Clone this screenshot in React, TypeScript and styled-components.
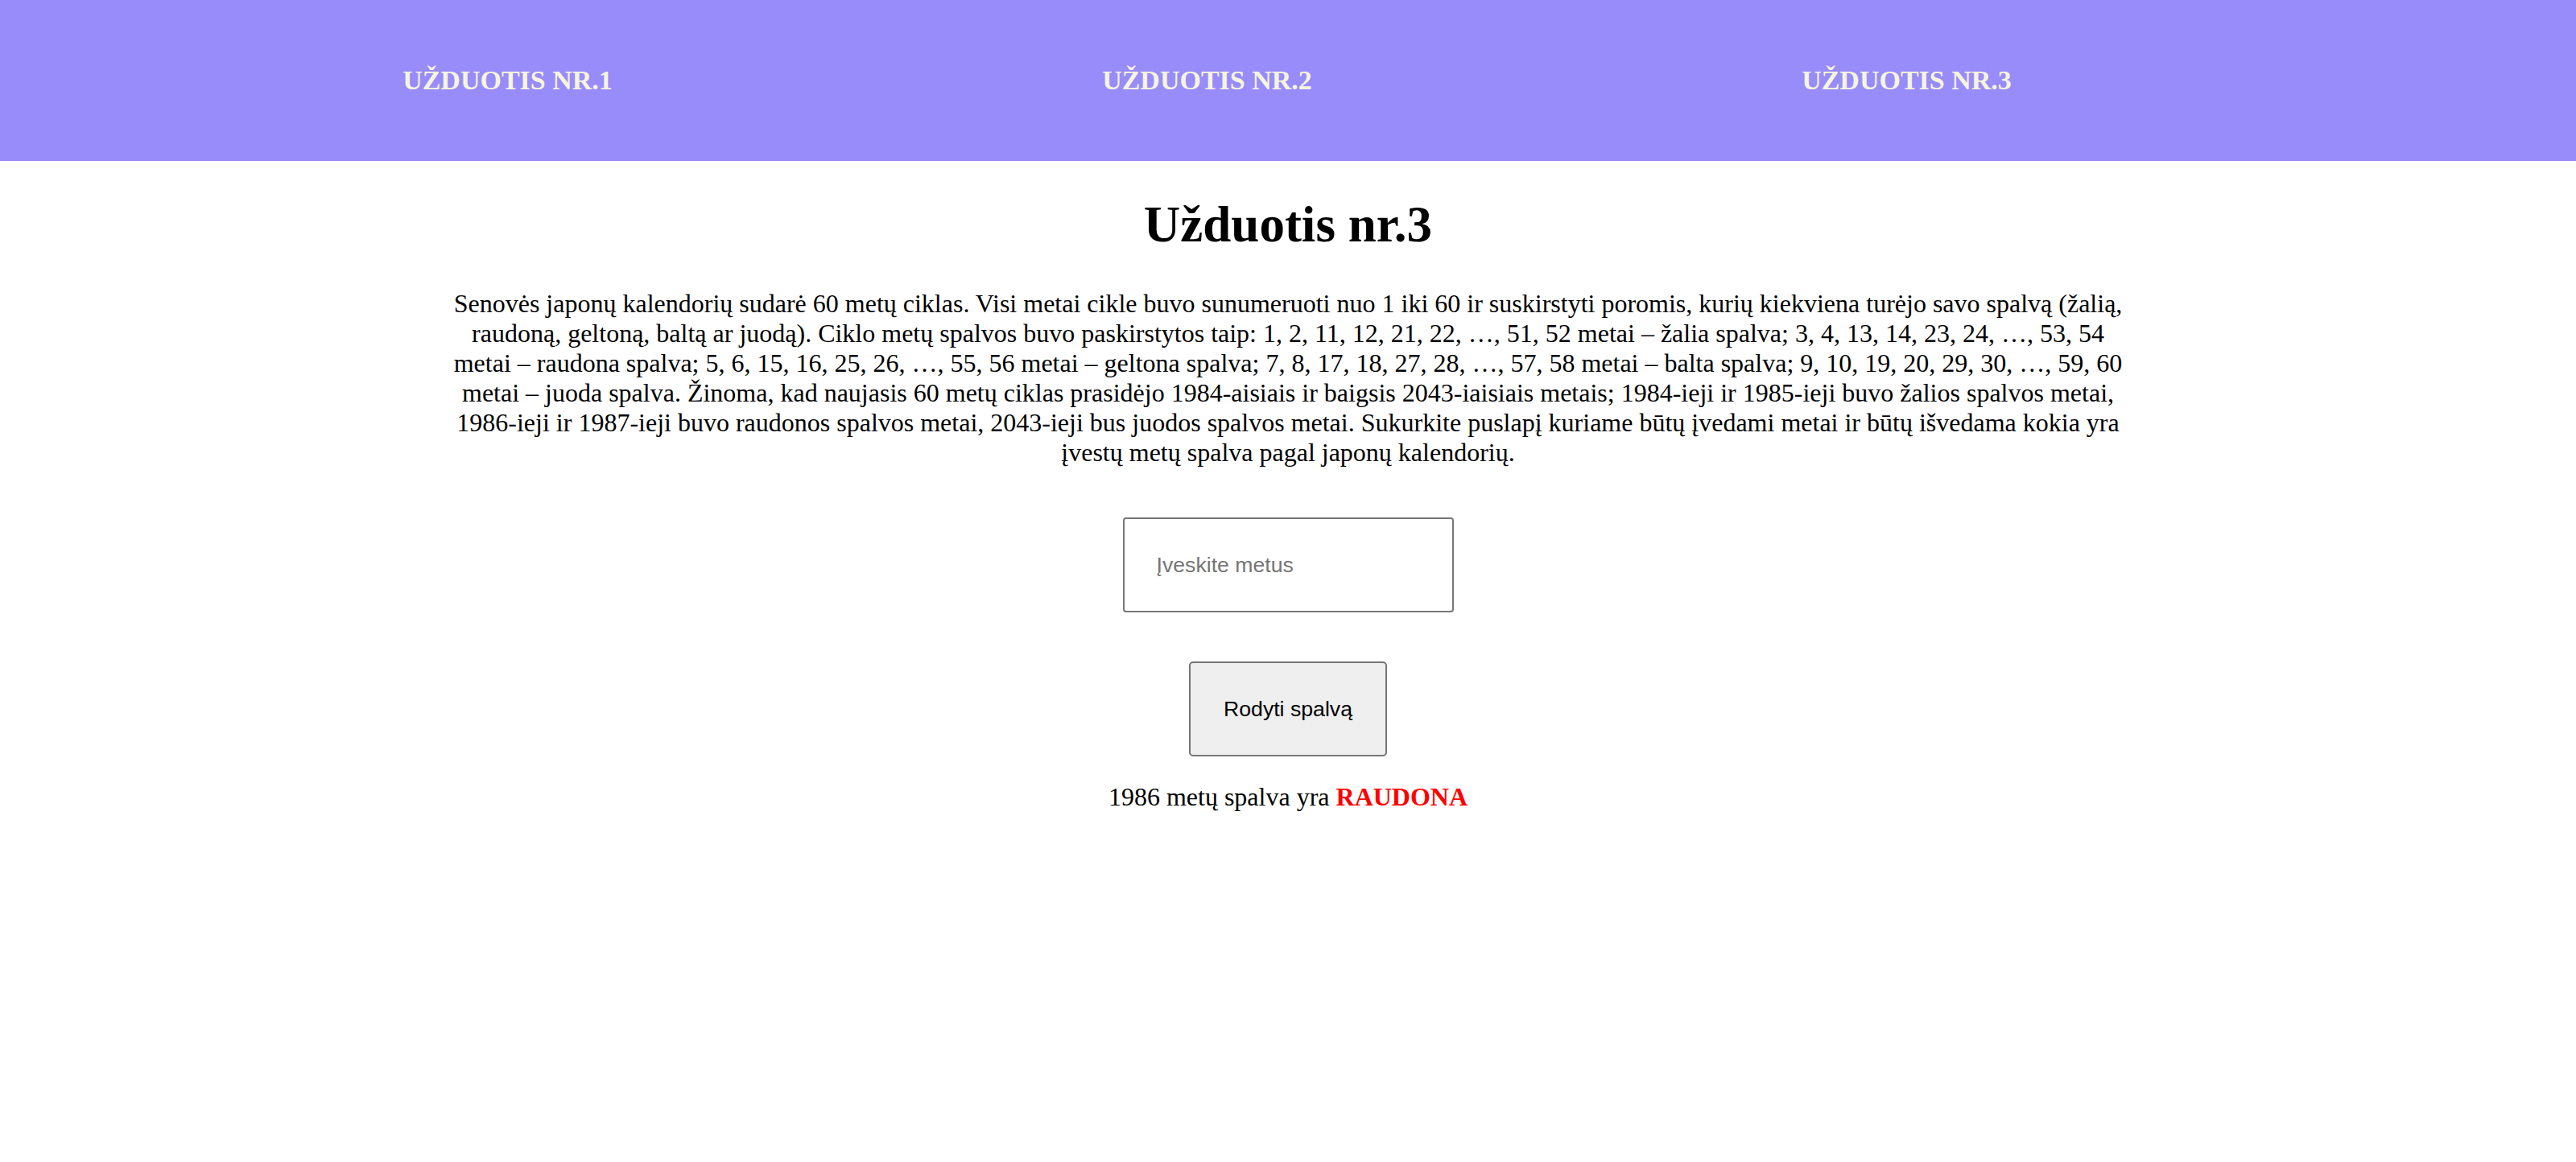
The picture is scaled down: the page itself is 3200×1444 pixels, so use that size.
import React from "react";
import styled, { createGlobalStyle } from "styled-components";

const GlobalStyle = createGlobalStyle`
  html, body {
    margin: 0;
    padding: 0;
    background: #ffffff;
    font-family: "Liberation Serif", "Times New Roman", serif;
    color: #000000;
  }
`;

const Nav = styled.nav`
  height: 200px;
  background: #988bfa;
  display: grid;
  grid-template-columns: repeat(3, 869px);
  padding-left: 196px;
  align-items: center;
`;

const NavItem = styled.a`
  justify-self: center;
  font-family: "Liberation Serif", "Times New Roman", serif;
  font-weight: bold;
  font-size: 34px;
  color: beige;
  text-decoration: none;
  cursor: pointer;
`;

const Main = styled.main`
  display: flex;
  flex-direction: column;
  align-items: center;
`;

const Title = styled.h1`
  font-size: 63px;
  font-weight: bold;
  margin: 43px 0 0;
  line-height: normal;
`;

const Description = styled.p`
  width: 2080px;
  font-size: 32px;
  line-height: normal;
  text-align: center;
  margin: 43px 0 0;
`;

const YearInput = styled.input`
  box-sizing: border-box;
  width: 411px;
  height: 118px;
  margin-top: 62px;
  padding: 0 40px;
  border: 2px solid #767676;
  border-radius: 4px;
  font-family: "Liberation Sans", Arial, sans-serif;
  font-size: 26.67px;
  color: #000;
  outline: none;

  &::placeholder {
    color: #757575;
  }
`;

const ShowButton = styled.button`
  box-sizing: border-box;
  width: 246px;
  height: 118px;
  margin-top: 61px;
  border: 2px solid #767676;
  border-radius: 5px;
  background: #efefef;
  font-family: "Liberation Sans", Arial, sans-serif;
  font-size: 26.67px;
  color: #000;
  cursor: pointer;
`;

const Result = styled.p`
  font-size: 32px;
  line-height: normal;
  margin: 32px 0 0;
  text-align: center;
`;

const ColorName = styled.span<{ $color: string }>`
  color: ${(p) => p.$color};
  font-weight: bold;
`;

export default function App() {
  return (
    <>
      <GlobalStyle />
      <Nav>
        <NavItem>UŽDUOTIS NR.1</NavItem>
        <NavItem>UŽDUOTIS NR.2</NavItem>
        <NavItem>UŽDUOTIS NR.3</NavItem>
      </Nav>
      <Main>
        <Title>Užduotis nr.3</Title>
        <Description>
          Senovės japonų kalendorių sudarė 60 metų ciklas. Visi metai cikle buvo
          sunumeruoti nuo 1 iki 60 ir suskirstyti poromis, kurių kiekviena turėjo
          savo spalvą (žalią, raudoną, geltoną, baltą ar juodą). Ciklo metų
          spalvos buvo paskirstytos taip: 1, 2, 11, 12, 21, 22, …, 51, 52 metai –
          žalia spalva; 3, 4, 13, 14, 23, 24, …, 53, 54 metai – raudona spalva; 5,
          6, 15, 16, 25, 26, …, 55, 56 metai – geltona spalva; 7, 8, 17, 18, 27,
          28, …, 57, 58 metai – balta spalva; 9, 10, 19, 20, 29, 30, …, 59, 60
          metai – juoda spalva. Žinoma, kad naujasis 60 metų ciklas prasidėjo
          1984-aisiais ir baigsis 2043-iaisiais metais; 1984-ieji ir 1985-ieji
          buvo žalios spalvos metai, 1986-ieji ir 1987-ieji buvo raudonos spalvos
          metai, 2043-ieji bus juodos spalvos metai. Sukurkite puslapį kuriame
          būtų įvedami metai ir būtų išvedama kokia yra įvestų metų spalva pagal
          japonų kalendorių.
        </Description>
        <YearInput type="text" placeholder="Įveskite metus" />
        <ShowButton type="button">Rodyti spalvą</ShowButton>
        <Result>
          1986 metų spalva yra <ColorName $color="#ff0000">RAUDONA</ColorName>
        </Result>
      </Main>
    </>
  );
}
